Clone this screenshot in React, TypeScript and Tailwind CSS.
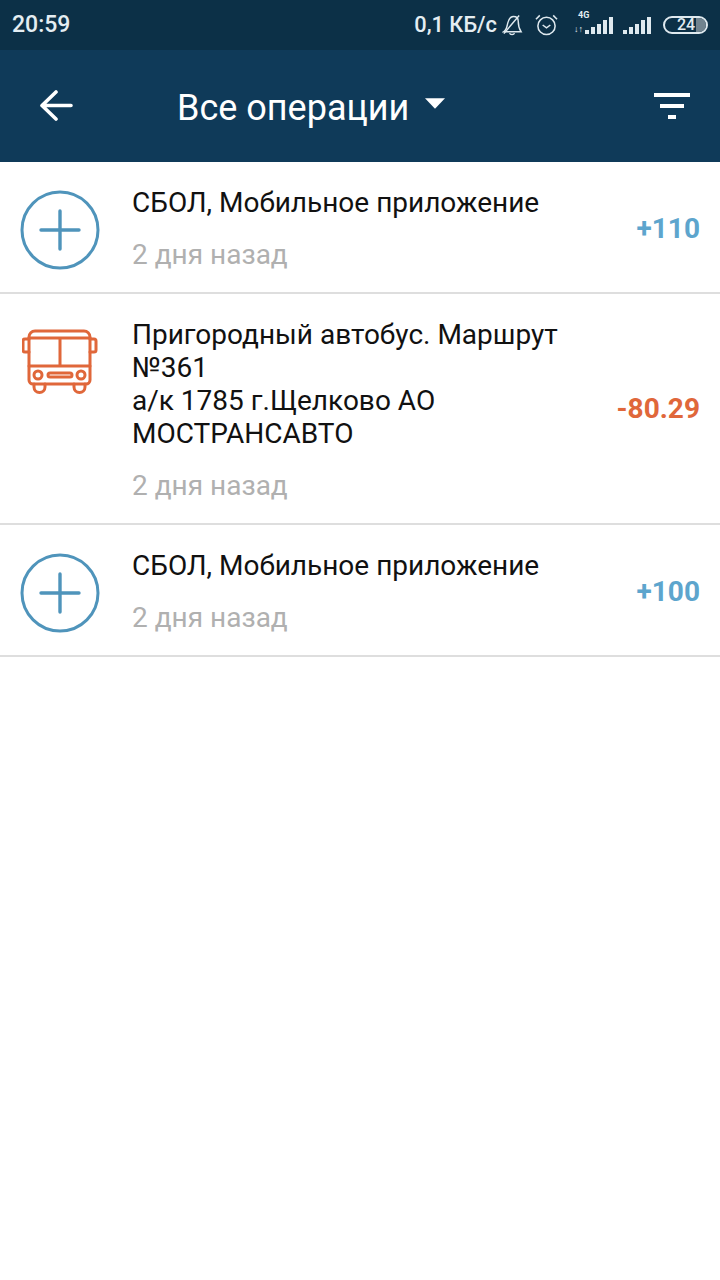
function PlusIcon() {
  return (
    <svg width="80" height="80" viewBox="0 0 80 80" fill="none" stroke="#4f94bb">
      <circle cx="40" cy="40" r="38" strokeWidth="3" />
      <path d="M21 40H59M40 21V59" strokeWidth="3.4" strokeLinecap="round" />
    </svg>
  );
}

function BusIcon() {
  return (
    <svg width="76" height="66" viewBox="1 3 76 66" fill="none" stroke="#e0673a" strokeWidth="3" strokeLinejoin="round" strokeLinecap="round">
      <path d="M8 11a6 6 0 0 1 6-6H63a6 6 0 0 1 6 6V54a4 4 0 0 1-4 4H12a4 4 0 0 1-4-4Z" />
      <path d="M8 12H69M8 40H69M39 12V40" />
      <path d="M8 13H4a2 2 0 0 0-2 2V24a2 2 0 0 0 2 2H8M69 13H73a2 2 0 0 1 2 2V24a2 2 0 0 1-2 2H69" />
      <circle cx="17" cy="49" r="4" />
      <circle cx="60" cy="49" r="4" />
      <rect x="27" y="47" width="24" height="4" rx="2" />
      <path d="M13 58v3a5.5 5.5 0 0 0 11 0v-3M53 58v3a5.5 5.5 0 0 0 11 0v-3" />
    </svg>
  );
}

function Bars() {
  const heights = [4, 7, 10, 14, 17];
  return (
    <div className="flex items-end gap-[2px]">
      {heights.map((h) => (
        <span key={h} className="w-[4px] bg-[#dfe9ef]" style={{ height: h }} />
      ))}
    </div>
  );
}

function StatusBar() {
  return (
    <div className="flex h-[50px] items-center justify-between bg-[#0c3047] px-3 font-['Roboto',sans-serif] font-medium text-[#e4edf2]">
      <span className="text-[23px]">20:59</span>
      <div className="flex items-center">
        <span className="text-[21.800px]">0,1 КБ/с</span>
        <svg className="ml-[5px]" width="21" height="24" viewBox="0 0 22 24" fill="none" stroke="#dfe9ef" strokeWidth="1.5">
          <path d="M2 19c3-2 3-5 4-9s3-7 6-7 5 2 5 5 1 8 3 11Z" />
          <path d="M8 20.500c.5 2 4.500 2 5 0M2 21 18 2" />
        </svg>
        <svg className="ml-[12px]" width="23" height="24" viewBox="0 0 24 24" fill="none" stroke="#dfe9ef" strokeWidth="1.6">
          <circle cx="12" cy="13" r="9" />
          <path d="M8 12l4 3 4-3M1 6l4-4M23 6l-4-4" />
        </svg>
        <div className="relative ml-[16px] flex w-[39px] justify-end">
          <span className="absolute left-[4px] top-[-7px] text-[9px] font-bold leading-[10px]">4G</span>
          <span className="absolute bottom-0 left-0 text-[9px] font-bold leading-[10px]">↓↑</span>
          <div className="flex justify-end">
            <Bars />
          </div>
        </div>
        <div className="ml-[10px]">
          <Bars />
        </div>
        <div className="relative ml-[12px] flex h-[18px] w-[45px] items-center overflow-hidden rounded-full border-2 border-[#dfe9ef] pl-[12px] text-[16px] leading-none">
          <span className="absolute inset-y-0 right-0 w-[10px] bg-[#71838f]" />
          <span className="relative">24</span>
        </div>
      </div>
    </div>
  );
}

function Header() {
  return (
    <div className="flex h-[112px] items-center bg-[#0f3a59] text-white">
      <div className="ml-[39px] w-[138px]">
        <svg width="34" height="32" viewBox="0 0 34 32" fill="none" stroke="white" strokeWidth="3.6" strokeLinecap="round" strokeLinejoin="round">
          <path d="M32 15.500H3M17 2 3 15.500 17 29" />
        </svg>
      </div>
      <span className="mt-[3px] font-['Roboto',sans-serif] text-[36px] leading-none">Все операции</span>
      <svg className="mb-[5px] ml-[16px]" width="20" height="11" viewBox="0 0 21 11" fill="white">
        <path d="M0 0H21L10.500 11Z" />
      </svg>
      <div className="ml-auto mr-[30px] flex flex-col items-center gap-[7px]">
        <span className="h-[4px] w-[36px] bg-white" />
        <span className="h-[4px] w-[24px] bg-white" />
        <span className="h-[4px] w-[8px] bg-white" />
      </div>
    </div>
  );
}

type Op = {
  icon: "plus" | "bus";
  title: string[];
  amount: string;
  color: string;
};

const OPS: Op[] = [
  { icon: "plus", title: ["СБОЛ, Мобильное приложение"], amount: "+110", color: "text-[#5da5cd]" },
  {
    icon: "bus",
    title: ["Пригородный автобус. Маршрут", "№361", "а/к 1785 г.Щелково АО", "МОСТРАНСАВТО"],
    amount: "-80.29",
    color: "text-[#e0673a]",
  },
  { icon: "plus", title: ["СБОЛ, Мобильное приложение"], amount: "+100", color: "text-[#5da5cd]" },
];

function Row({ op }: { op: Op }) {
  const isBus = op.icon === "bus";
  return (
    <div className="flex border-b-2 border-[#dedede] px-5 font-['Roboto',sans-serif]">
      <div className={isBus ? "w-[112px] pl-[2px] pt-[35px]" : "flex w-[112px] items-center pt-[5px]"}>
        {isBus ? <BusIcon /> : <PlusIcon />}
      </div>
      <div className="flex-1 pb-[21px] pt-[24px]">
        {op.title.map((line) => (
          <div key={line} className="text-[28px] leading-[33px] text-[#111111]">
            {line}
          </div>
        ))}
        <div className="mt-[19px] text-[28px] leading-[33px] text-[#b0b0b0]">2 дня назад</div>
      </div>
      <div className={`flex items-center text-[28px] font-bold ${isBus ? "" : "pt-[4px]"} ${op.color}`}>{op.amount}</div>
    </div>
  );
}

export default function App() {
  return (
    <div className="h-[1280px] w-[720px] overflow-hidden bg-white">
      <StatusBar />
      <Header />
      {OPS.map((op) => (
        <Row key={op.amount} op={op} />
      ))}
    </div>
  );
}
